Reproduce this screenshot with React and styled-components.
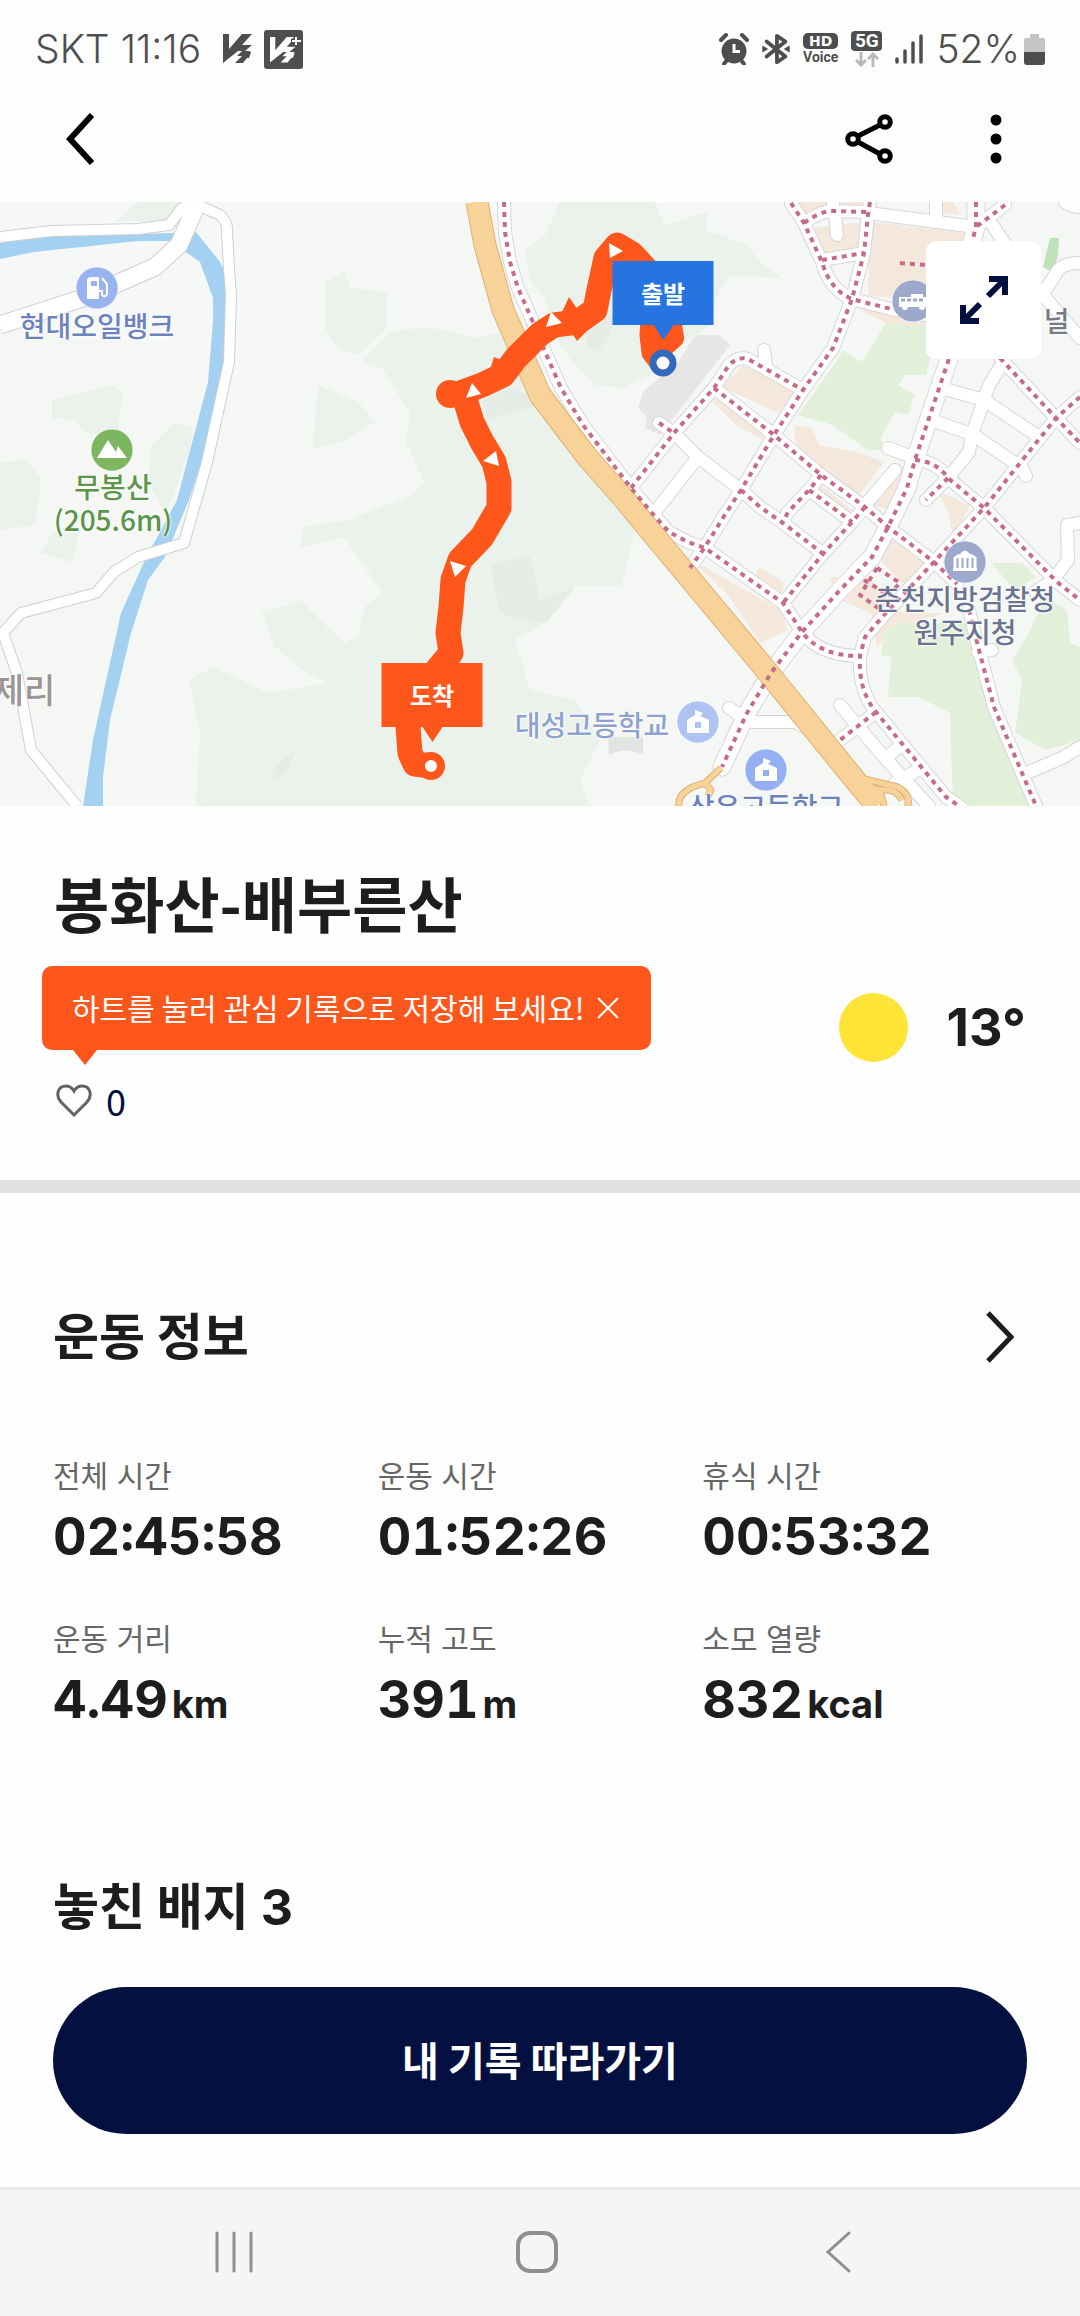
import React from 'react'
import styled, { createGlobalStyle } from 'styled-components'

const navy = '#04103f';
const ink = '#1d1d1d';
const orange = '#ff571b';
const status = '#4e4e4e';

const stats = [
    { label: '전체 시간', value: '02:45:58' },
    { label: '운동 시간', value: '01:52:26' },
    { label: '휴식 시간', value: '00:53:32' },
    { label: '운동 거리', value: '4.49', unit: 'km' },
    { label: '누적 고도', value: '391', unit: 'm' },
    { label: '소모 열량', value: '832', unit: 'kcal' },
];

// Map geometry, all on one 1080 wide canvas that starts at y 202
const hills = [
    'M389 332L427 327 480 338 505 330 540 400 600 470 635 530 622 585 575 587 547 622 515 640 530 690 575 700 600 740 580 780 590 806 196 806 200 733 189 680 213 667 269 693 327 683 303 670 275 647 262 613 300 600 344 643 358 637 365 607 382 593 362 563 344 537 300 547 303 527 348 520 413 495 424 482 406 442 410 413 382 368 362 362Z',
    'M560 202L655 202 664 225 708 212 706 230 747 245 760 262 781 278 730 275 715 300 712 325 680 345 650 375 622 388 595 385 575 365 560 345 545 300 530 280 525 250 545 235Z',
    'M176 422L193 428 190 450 165 515 148 480 152 445Z',
    'M0 462L27 460 41 480 35 525 0 530Z',
    'M52 400L114 385 124 395 118 418 120 440 85 432 76 420 52 418Z',
    'M138 202L180 202 168 220 115 222Z',
    'M52 533L79 533 72 562 41 553Z',
    'M325 282L344 272 351 288 387 292 387 328 358 355 337 348 325 328Z',
    'M318 385L358 402 375 422 344 442 313 448Z',
];
const shades = [
    'M490 565L530 555 540 600 575 587 547 622 515 620 500 612Z',
    'M276 765L294 752 290 765 278 781 270 778Z',
    'M585 325L618 315 600 350 588 347Z',
    'M482 400L512 388 540 400 530 408 488 418Z',
];
const blocks = [
    'M795 202L870 202 868 212 833 210 805 222Z',
    'M812 228L864 222 864 252 824 258Z',
    'M870 222L970 233 970 250 926 250 926 300 868 296Z',
    'M941 202L953 202 961 215 943 213Z',
    'M858 309L926 318 926 330 886 323Z',
    'M743 365L797 392 778 413 722 387Z',
    'M706 395L746 412 767 442 736 425Z',
    'M795 425L812 428 819 445 857 452 884 462 857 497 822 472 795 442Z',
    'M820 485L855 512 845 520 815 494Z',
    'M890 480L905 470 893 510 870 505Z',
    'M692 560L781 610 788 630 760 643 743 617 726 593Z',
    'M760 567L784 583 781 600 754 577Z',
    'M888 530L929 563 905 587 874 553Z',
    'M829 577L871 580 902 613 946 613 895 627 877 647 871 613 840 600Z',
    'M936 490L970 505 953 537 948 510Z',
];
const parks = [
    'M886 323L938 327 931 355 926 375 905 375 898 385 915 395 908 415 895 412 881 437 884 450 867 450 833 425 798 415 836 362 843 350 862 362Z',
    'M884 633L902 623 967 623 974 657 995 713 1029 806 953 806 950 713 919 697 888 697 891 657 881 655Z',
    'M991 563L1022 563 1036 577 1015 590Z',
    'M1045 597L1067 610 1070 643 1080 647 1080 740 1046 750 1015 733 1022 680 1012 660 1029 633Z',
];
const lanes = [
    'M833 202V211',
    'M868 213L976 227',
    'M835 211L837 235',
    'M936 202V220',
    'M764 350L766 364',
    'M674 433L698 457 741 490',
    'M698 457L655 512',
    'M989 220L1008 248 1043 295 1080 338',
    'M1080 263Q1060 263 1055 275L1046 289',
    'M1001 366L989 385 972 435 969 452 948 478',
    'M941 388L984 400 1036 435',
    'M931 420L974 435 1022 468 1026 476',
    'M888 448L915 458',
    'M895 470L865 505',
    'M729 708L750 722H795L830 742',
    'M840 705L884 757 929 806',
    'M918 770L895 783',
    'M900 746L886 758',
    'M1029 772L1062 758 1080 747',
    'M1080 523L1067 525 1068 560 1053 580 1035 592',
    'M978 652L992 650',
    'M1065 202Q1072 207 1080 207',
];
const footways = [
    'M504 202L505 232 510 262 518 288 532 320 543 347 561 388 583 425 631 488 652 513 669 532 688 542 705 548 783 603 802 632Q820 656 860 656',
    'M791 203L804 223 822 262Q830 290 852 299L891 309 926 315',
    'M870 202L868 215 864 253 852 299 833 348 803 390 774 435 741 490 726 513 705 547 690 568',
    'M804 223Q820 211 833 211L868 212',
    'M822 260L864 253',
    'M741 490L760 507 783 523 822 553',
    'M659 423L674 433',
    'M631 488L674 433 714 388 729 365Q738 356 748 359L803 390',
    'M714 388L774 435 821 475 865 507 888 527 934 562 957 584',
    'M821 475L809 490 788 512 783 522',
    'M809 490L852 522',
    'M865 507L852 522 822 555 783 603',
    'M1005 205L976 227',
    'M1000 358L1056 418 1080 443',
    'M1080 397L1056 418 984 508 934 562 884 615 865 637 860 656Q858 690 876 712L946 797 962 808',
    'M915 460Q936 461 948 478L984 508 1057 582 1080 600',
    'M948 478L926 500',
    'M876 712L840 740',
    'M969 610L979 650 994 707 1036 806',
];
const avenue = 'M976 202V227L972 242 949 359 931 412 915 460 907 488 888 527 872 557 840 590 802 632 771 673 747 713 722 767';
const paths = [
    'M877 568L900 583 884 600',
    'M877 568L860 595 881 610',
    'M864 580L890 596',
    'M900 263L926 265',
];
const country = 'M0 237L52 231 138 229 169 225 182 208 193 203 220 215Q228 222 227 232L229 268 231 295 229 362 207 462 184 543 138 557 114 572 96 593 21 613 3 633 17 673 31 750 77 806';
const bridge = 'M0 325L86 297 155 267 179 245 198 202';
const river = 'M0 243L52 236 145 234 196 232 220 262 226 275 224 362 207 445 189 500 165 557 148 580 131 633 110 720 103 777 103 806 83 806 93 740 121 613 145 560 177 500 208 382 213 322 213 298 200 262 183 250 169 241 138 241 34 252 0 259Z';
const highway = 'M477 202L485 245 503 310 517 342 540 395 588 458 625 500 652 533 766 670 855 780 877 806';
const ramps = [
    'M721 768L705 783Q676 790 679 808',
    'M705 783L711 790 708 796',
    'M860 778L898 787Q912 795 907 808',
    'M868 786L880 790Q896 788 902 800',
    'M880 790L884 806',
];
const track = 'M663 363L654 352 652 335 655 290 645 268 632 254 617 245 606 258 599 290 595 310 578 322 554 325 540 334 516 358 503 375 482 385 463 392 472 422 482 442 494 462 499 482 499 508 482 537 460 560 453 580 451 607 448 633 451 653 437 670 415 700 408 727 410 753 415 764 431 766';
const arrows = [
    'M609 243L623 251 610 258Z',
    'M551 312L562 323 546 327Z',
    'M472 383L481 394 466 398Z',
    'M496 451L483 461 499 466Z',
    'M450 561L466 566 455 577Z',
];

const labels = [
    { text: '현대오일뱅크', x: 97, y: 325, color: '#6b82bd' },
    { text: '무봉산\n(205.6m)', x: 113, y: 503, color: '#5c944a' },
    { text: '제리', x: 24, y: 688, color: '#9c9494', large: true },
    { text: '대성고등학교', x: 592, y: 724, color: '#8ea2d0' },
    { text: '상우고등학교', x: 766, y: 806, color: '#6b82bd' },
    { text: '춘천지방검찰청\n원주지청', x: 965, y: 615, color: '#6b7390' },
    { text: '터미널', x: 1031, y: 320, color: '#777b88' },
];

function Chevron({ flip, color, stroke = 5 }) {
    return (
        <svg width="28" height="52" viewBox="0 0 28 52" fill="none" stroke={color} strokeWidth={stroke} aria-hidden="true">
            <path d={flip ? 'M2 2L25 26 2 50' : 'M26 2L4 26 26 50'} />
        </svg>
    )
}

function VThree({ color }) {
    return (
        <path fill={color} d="M0 0H6V15L19 0H29L19 11H29L22 17H26L28 18 26 24H24L20 29H12L19 22H14L19 17H15L0 29Z" />
    )
}

function StatusIcons() {
    return (
        <>
            <StatusSvg $w={30} viewBox="0 0 30 32">
                <circle cx="15" cy="18" r="12.5" fill={status} />
                <path d="M2 7L7 2M28 7L23 2M5 31L8 27M25 31L22 27" stroke={status} strokeWidth="4" strokeLinecap="round" />
                <path d="M15 11V18.500H21" stroke="#fff" strokeWidth="3" fill="none" />
            </StatusSvg>
            <StatusSvg $w={28} viewBox="0 0 28 34">
                <path d="M4 9L24 25 15 31V3L24 9 4 25" fill="none" stroke={status} strokeWidth="4" strokeLinejoin="round" strokeLinecap="round" />
                <path d="M0 14L5 17 0 20ZM28 14L23 17 28 20Z" fill={status} stroke={status} />
            </StatusSvg>
            <Voice><b>HD</b><span>Voice</span></Voice>
            <Network>
                <b>5G</b>
                <svg width="24" height="15" viewBox="0 0 24 15" fill="none" stroke="#b9b9b9" strokeWidth="3" aria-hidden="true">
                    <path d="M6 0V13M1 8L6 13 11 8M18 15V2M13 7L18 2 23 7" />
                </svg>
            </Network>
            <StatusSvg $w={28} viewBox="0 0 28 30">
                <path d="M2 25V28M10 17V28M18 9V28M26 2V28" stroke={status} strokeWidth="3.500" strokeLinecap="round" />
            </StatusSvg>
        </>
    )
}

function Poi({ x, y, fill, children }) {
    return (
        <g transform={`translate(${x} ${y})`}>
            <circle r="21" fill={fill} stroke="#fff" strokeOpacity="0.6" />
            {children}
        </g>
    )
}

const school = (fill) => (
    <>
        <path d="M-11 11V-2L-3 -7V-12L5 -9 2 -6 11 -2V11Z" fill="#fff" />
        <rect x="-3" y="0" width="6" height="6" fill={fill} />
    </>
);

function MapDrawing() {
    return (
        <svg viewBox="0 202 1080 604" role="img" aria-label="코스 지도">
            <rect y="202" width="1080" height="604" fill="#f4f7f4" />
            <path d="M0 202H270V260L240 440 200 350 0 330Z" fill="#f6f7f7" />
            {hills.map((d) => <path key={d} d={d} fill="#ebf2eb" />)}
            {shades.map((d) => <path key={d} d={d} fill="#e5ece5" />)}
            {blocks.map((d) => <path key={d} d={d} fill="#f4e8dd" />)}
            {parks.map((d) => <path key={d} d={d} fill="#e2efd9" />)}
            <path d="M1050 238H1059L1058 255 1053 272 1043 267Z" fill="#bfe0b8" />
            <path d="M695 335H719L730 345 660 435 645 428 647 417 638 408 643 392 678 362Z" fill="#e6e6e6" />
            <path d="M608 737H643V755Q626 746 609 755Z" fill="#e2e4e2" />
            <path d={river} fill="#a4d1f1" />

            <g fill="none" strokeLinejoin="round">
                <path d={country} stroke="#cfcfcf" strokeWidth="12" />
                <path d={bridge} stroke="#cfcfcf" strokeWidth="19" />
                <path d={country} stroke="#fff" strokeWidth="10" />
                <path d={bridge} stroke="#fff" strokeWidth="17" />

                <g stroke="#d6d6d6" strokeWidth="14" strokeLinecap="round">
                    {[...lanes, ...footways].map((d) => <path key={d} d={d} />)}
                    <path d={avenue} strokeWidth="19" />
                </g>
                <g stroke="#fff" strokeWidth="12" strokeLinecap="round">
                    {[...lanes, ...footways].map((d) => <path key={d} d={d} />)}
                    <path d={avenue} strokeWidth="17" />
                </g>
                <path d={highway} stroke="#dfae73" strokeWidth="23" />
                {ramps.map((d) => <path key={d} d={d} stroke="#dfae73" strokeWidth="7" />)}
                {ramps.map((d) => <path key={d} d={d} stroke="#f8d399" strokeWidth="5" />)}
                <path d={highway} stroke="#f8d399" strokeWidth="21" />
                <g stroke="#c66c88" strokeWidth="4" strokeDasharray="5 5">
                    {[...footways, ...paths].map((d) => <path key={d} d={d} />)}
                    <path d={avenue} />
                </g>

                <path d={track} stroke={orange} strokeWidth="25" strokeLinecap="round" />
                <path d="M672 325L674 338 665 346" stroke={orange} strokeWidth="20" strokeLinecap="round" />
            </g>
            <circle cx="450" cy="394" r="14" fill={orange} />
            <path d="M562 312L569 297 578 310ZM570 330L577 341 586 332ZM488 376L494 357 506 362Z" fill={orange} />
            {arrows.map((d) => <path key={d} d={d} fill="#fff" />)}

            <circle cx="663" cy="363" r="10" fill="#fff" stroke="#3269bd" strokeWidth="7" />
            <circle cx="431" cy="766" r="10" fill="#fff" stroke={orange} strokeWidth="8" />

            <Poi x={97} y={288} fill="#99b2f0">
                <path d="M-10 11V-7Q-10 -11 -6 -11H2V11Z" fill="#fff" />
                <path d="M-6 -7H0V-2H-6Z" fill="#99b2f0" />
                <path d="M2 3H5V7Q8 10 10 6V-4L5 -10" fill="none" stroke="#fff" strokeWidth="2" />
            </Poi>
            <Poi x={112} y={450} fill="#7cb660">
                <path d="M-15 8L-4 -10 4 2 6 -4 15 8Z" fill="#fff" />
            </Poi>
            <Poi x={913} y={301} fill="#9ca9cd">
                <path d="M-14 -4H-2V-7H10V-4H15V6H-14Z" fill="#fff" />
                <path d="M-12 -1H12" stroke="#9ca9cd" strokeWidth="3" strokeDasharray="4 2" />
                <circle cx="-8" cy="6" r="3" fill="#fff" /><circle cx="9" cy="6" r="3" fill="#fff" />
            </Poi>
            <Poi x={965} y={562} fill="#9ca9cd">
                <path d="M-12 -4Q-8 -8 -5 -8Q0 -15 5 -8Q8 -8 12 -4ZM-12 9H12V6H-12Z" fill="#fff" />
                <path d="M-10 -4V7M-5 -4V7M0 -4V7M5 -4V7M10 -4V7" stroke="#fff" strokeWidth="3" />
            </Poi>
            <Poi x={698} y={722} fill="#afc3f3">{school('#afc3f3')}</Poi>
            <Poi x={766} y={770} fill="#94b0f2">{school('#94b0f2')}</Poi>
        </svg>
    )
}

function CourseMap() {
    return (
        <MapBox>
            <MapDrawing />
            {labels.map((l) => (
                <MapLabel key={l.text} $x={l.x} $y={l.y} $color={l.color} $large={l.large}>{l.text}</MapLabel>
            ))}
            <Flag $x={663} $y={293} $color="#2674df">출발</Flag>
            <Flag $x={432} $y={695} $color={orange}>도착</Flag>
            <ExpandButton aria-label="지도 확대">
                <svg width="48" height="48" viewBox="0 0 48 48" fill="none" stroke={navy} strokeWidth="6" aria-hidden="true">
                    <path d="M29 3H45V19M45 3L28 20M19 45H3V29M3 45L20 28" />
                </svg>
            </ExpandButton>
        </MapBox>
    )
}

export default function App() {
    return (
        <Page>
            <GlobalStyle />
            <StatusBar>
                <StatusGroup $gap={11}>
                    <StatusText $space={11}>SKT 11:16</StatusText>
                    <svg width="30" height="30" viewBox="0 0 30 30" aria-hidden="true"><VThree color={status} /></svg>
                    <svg width="39" height="39" viewBox="0 0 39 39" aria-hidden="true">
                        <rect width="39" height="39" rx="3" fill={status} />
                        <g transform="translate(6 7) scale(.88)"><VThree color="#fff" /></g>
                        <path d="M32 6V16M27 11H37" stroke={status} strokeWidth="5" />
                        <path d="M32 7V15M28 11H37" stroke="#fff" strokeWidth="2" />
                    </svg>
                </StatusGroup>
                <StatusGroup $gap={13}>
                    <StatusIcons />
                    <StatusText $space={4}>52%</StatusText>
                    <Battery viewBox="0 0 21 31">
                        <path d="M6 0H15V4H19Q21 4 21 6V18H0V6Q0 4 2 4H6Z" fill="#c4c4c4" />
                        <path d="M0 18H21V28Q21 31 18 31H3Q0 31 0 28Z" fill={status} />
                    </Battery>
                </StatusGroup>
            </StatusBar>

            <AppBar>
                <IconButton aria-label="뒤로"><Chevron color="#000" stroke={6} /></IconButton>
                <BarActions>
                    <IconButton aria-label="공유">
                        <svg width="48" height="52" viewBox="0 0 48 52" fill="none" stroke="#000" strokeWidth="5" aria-hidden="true">
                            <path d="M13 23L35 12M13 29L35 41" />
                            <circle cx="8" cy="26" r="5.300" /><circle cx="40" cy="9" r="5.300" /><circle cx="40" cy="43" r="5.300" />
                        </svg>
                    </IconButton>
                    <IconButton aria-label="더보기">
                        <svg width="12" height="52" viewBox="0 0 12 52" aria-hidden="true">
                            <circle cx="6" cy="7" r="5.500" /><circle cx="6" cy="26" r="5.500" /><circle cx="6" cy="45" r="5.500" />
                        </svg>
                    </IconButton>
                </BarActions>
            </AppBar>

            <CourseMap />

            <Summary>
                <Title>봉화산-배부른산</Title>
                <SummaryRow>
                    <div>
                        <Tip>
                            <span>하트를 눌러 관심 기록으로 저장해 보세요!</span>
                            <IconButton aria-label="닫기">
                                <svg width="22" height="22" viewBox="0 0 22 22" stroke="#fff" strokeWidth="2" aria-hidden="true"><path d="M1 1L21 21M21 1L1 21" /></svg>
                            </IconButton>
                        </Tip>
                        <LikeButton aria-label="좋아요 0">
                            <svg width="36" height="33" viewBox="0 0 36 33" fill="none" stroke="#626262" strokeWidth="3" aria-hidden="true">
                                <path d="M18 31L5 18C-1 11 2 2 10 2Q15 2 18 7Q21 2 26 2C34 2 37 11 31 18Z" />
                            </svg>
                            <span>0</span>
                        </LikeButton>
                    </div>
                    <Weather>
                        <Sun />
                        <span>13°</span>
                    </Weather>
                </SummaryRow>
            </Summary>

            <Details>
                <SectionHead>
                    <Heading>운동 정보</Heading>
                    <IconButton aria-label="운동 정보 더보기"><Chevron flip color={ink} /></IconButton>
                </SectionHead>
                <StatGrid>
                    {stats.map((s) => (
                        <Stat key={s.label}>
                            <dt>{s.label}</dt>
                            <dd>{s.value}{s.unit && <small>{s.unit}</small>}</dd>
                        </Stat>
                    ))}
                </StatGrid>
                <Heading>놓친 배지 3</Heading>
                <FollowButton>내 기록 따라가기</FollowButton>
            </Details>

            <SystemNav>
                <IconButton aria-label="최근 앱">
                    <svg width="40" height="42" viewBox="0 0 40 42" stroke="#8f8f8f" strokeWidth="3" strokeLinecap="round" aria-hidden="true"><path d="M3 2V40M20 2V40M37 2V40" /></svg>
                </IconButton>
                <IconButton aria-label="홈">
                    <svg width="42" height="42" viewBox="0 0 42 42" fill="none" stroke="#8f8f8f" strokeWidth="4" aria-hidden="true"><rect x="2" y="2" width="38" height="38" rx="12" /></svg>
                </IconButton>
                <IconButton aria-label="이전">
                    <svg width="40" height="42" viewBox="0 0 40 42" fill="none" stroke="#8f8f8f" strokeWidth="3" strokeLinecap="round" aria-hidden="true"><path d="M30 2L9 21 30 40" /></svg>
                </IconButton>
            </SystemNav>
        </Page>
    )
}

const GlobalStyle = createGlobalStyle`
    * {
        box-sizing: border-box;
    }
    body {
        margin: 0;
        background: #fefefe;
        color: ${ink};
        font-family: "Noto Sans CJK KR", sans-serif;
    }
    button {
        font-family: inherit;
    }
    svg {
        display: block;
        flex: none;
    }
`;

const Page = styled.div`
    display: flex;
    flex-direction: column;
    min-height: 100vh;
`;

const StatusBar = styled.div`
    display: flex;
    justify-content: space-between;
    align-items: center;
    height: 76px;
    padding: 22px 35px 0;
    color: ${status};
`;

const StatusGroup = styled.div`
    display: flex;
    align-items: center;
    gap: ${(p) => p.$gap}px;
`;

const StatusText = styled.span`
    margin-right: ${(p) => p.$space}px;
    font-family: Inter, sans-serif;
    font-size: 39px;
    font-weight: 300;
    line-height: 48px;
`;

const StatusSvg = styled.svg.attrs({ 'aria-hidden': true })`
    width: ${(p) => p.$w}px;
    height: 32px;
`;

const Battery = styled.svg.attrs({ 'aria-hidden': true })`
    width: 21px;
    height: 31px;
    margin-left: -13px;
`;

const Voice = styled.span`
    display: flex;
    flex-direction: column;
    align-items: center;
    font-family: Roboto, sans-serif;
    font-size: 14px;
    font-weight: 700;
    line-height: 16px;
    b {
        width: 35px;
        border-radius: 5px;
        background: ${status};
        color: #fff;
        font-family: "DejaVu Sans", sans-serif;
        text-align: center;
    }
`;

const Network = styled.span`
    display: flex;
    flex-direction: column;
    align-items: center;
    gap: 1px;
    b {
        width: 31px;
        border-radius: 4px;
        background: ${status};
        color: #fff;
        font-family: Roboto, sans-serif;
        font-size: 19px;
        line-height: 20px;
        text-align: center;
    }
`;

const IconButton = styled.button`
    display: flex;
    padding: 0;
    border: 0;
    background: none;
    cursor: pointer;
`;

const AppBar = styled.header`
    display: flex;
    justify-content: space-between;
    align-items: center;
    height: 126px;
    padding: 0 78px 0 66px;
`;

const BarActions = styled.div`
    display: flex;
    gap: 97px;
`;

const MapBox = styled.div`
    position: relative;
    aspect-ratio: 1080 / 604;
    overflow: hidden;
    > svg {
        width: 100%;
        height: 100%;
    }
`;

const onMap = (p) => `
    position: absolute;
    left: ${p.$x / 10.8}%;
    top: ${(p.$y - 202) / 6.04}%;
    transform: translate(-50%, -50%);
    white-space: pre;
    text-align: center;
`;

const MapLabel = styled.span`
    ${onMap}
    color: ${(p) => p.$color};
    font-size: ${(p) => (p.$large ? 34 : 28)}px;
    font-weight: 500;
    line-height: 33px;
    text-shadow: 0 0 2px #fff, 0 0 2px #fff, 0 0 3px #fff;
`;

const Flag = styled.span`
    ${onMap}
    width: 101px;
    background: ${(p) => p.$color};
    color: #fff;
    font-size: 24px;
    font-weight: 700;
    line-height: 64px;
    &::after {
        content: '';
        position: absolute;
        top: 100%;
        left: 50%;
        border: 10px solid transparent;
        border-top: 15px solid ${(p) => p.$color};
        border-bottom: 0;
        transform: translateX(-50%);
    }
`;

const ExpandButton = styled.button`
    position: absolute;
    top: 39px;
    right: 39px;
    display: flex;
    align-items: center;
    justify-content: center;
    width: 115px;
    height: 118px;
    border: 0;
    border-radius: 10px;
    background: #fff;
    cursor: pointer;
`;

const Summary = styled.section`
    padding: 60px 54px 55px;
    border-bottom: 13px solid #e1e1e1;
`;

const Title = styled.h1`
    margin: 0 0 28px;
    font-size: 60px;
    font-weight: 700;
    line-height: 72px;
`;

const SummaryRow = styled.div`
    display: flex;
    justify-content: space-between;
    align-items: flex-start;
`;

const Tip = styled.div`
    position: relative;
    display: flex;
    align-items: center;
    gap: 12px;
    height: 84px;
    margin: 0 0 26px -12px;
    padding: 0 32px 0 30px;
    border-radius: 10px;
    background: ${orange};
    color: #fff;
    font-size: 30px;
    line-height: 44px;
    span {
        padding-bottom: 2px;
    }
    &::after {
        content: '';
        position: absolute;
        top: 100%;
        left: 31px;
        border: 12px solid transparent;
        border-top: 15px solid ${orange};
        border-bottom: 0;
    }
`;

const LikeButton = styled.button`
    display: flex;
    align-items: center;
    gap: 14px;
    height: 49px;
    padding: 0 0 0 2px;
    border: 0;
    background: none;
    color: ${navy};
    font-size: 36px;
    line-height: 48px;
    cursor: pointer;
    span {
        padding-bottom: 2px;
    }
`;

const Weather = styled.div`
    display: flex;
    align-items: center;
    gap: 38px;
    height: 122px;
    font-family: Inter, sans-serif;
    font-size: 52px;
    font-weight: 700;
`;

const Sun = styled.i`
    width: 69px;
    height: 69px;
    border-radius: 50%;
    background: #ffe336;
`;

const Details = styled.main`
    flex: 1;
    display: flex;
    flex-direction: column;
    padding: 114px 53px 53px;
`;

const SectionHead = styled.div`
    display: flex;
    justify-content: space-between;
    align-items: center;
    padding-right: 13px;
`;

const Heading = styled.h2`
    margin: 0;
    font-family: Inter, "Noto Sans CJK KR", sans-serif;
    font-size: 50px;
    font-weight: 700;
    line-height: 60px;
`;

const StatGrid = styled.dl`
    display: grid;
    grid-template-columns: repeat(3, 1fr);
    row-gap: 48px;
    margin: 87px 0 145px;
`;

const Stat = styled.div`
    dt {
        margin-bottom: 7px;
        color: #666;
        font-family: Inter, "Noto Sans CJK KR", sans-serif;
        font-size: 30px;
        line-height: 44px;
    }
    dd {
        display: flex;
        align-items: baseline;
        gap: 4px;
        margin: 0;
        font-family: Inter, sans-serif;
        font-size: 52px;
        font-weight: 700;
        font-variant-numeric: tabular-nums;
        line-height: 64px;
    }
    small {
        font-size: 38px;
        line-height: 48px;
    }
`;

const FollowButton = styled.button`
    height: 147px;
    margin-top: 50px;
    padding: 0 0 4px;
    border: 0;
    border-radius: 74px;
    background: ${navy};
    color: #fff;
    font-size: 40px;
    font-weight: 700;
    cursor: pointer;
`;

const SystemNav = styled.nav`
    display: flex;
    justify-content: space-between;
    align-items: center;
    height: 129px;
    padding: 0 221px 2px 214px;
    border-top: 3px solid #e8e8e8;
    background: #f5f5f7;
`;
